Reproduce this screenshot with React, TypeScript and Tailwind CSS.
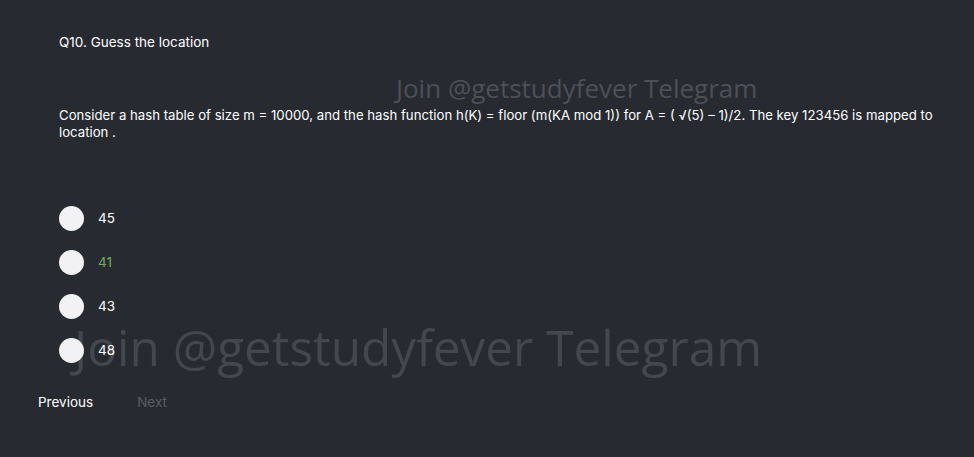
const options = [
  { label: "45", correct: false },
  { label: "41", correct: true },
  { label: "43", correct: false },
  { label: "48", correct: false },
];

function Option({ label, correct }: { label: string; correct: boolean }) {
  return (
    <div className="flex items-center h-[44px]">
      <span className="w-[25px] h-[25px] rounded-full bg-[#f2f2f4] shrink-0" />
      <span
        className={
          "ml-[14px] text-[13.5px] " + (correct ? "text-[#74a85c]" : "text-white")
        }
      >
        {label}
      </span>
    </div>
  );
}

export default function App() {
  return (
    <div
      className="relative w-[974px] h-[457px] bg-[#272a31] overflow-hidden text-white"
      style={{ fontFamily: "Inter, 'Noto Sans', sans-serif" }}
    >
      {/* watermarks sit under the content */}
      <div
        className="absolute left-[396px] top-[69px] text-[26px] text-[#4d5057] pointer-events-none"
        style={{ fontFamily: "'Open Sans', sans-serif" }}
      >
        Join @getstudyfever Telegram
      </div>
      <div
        className="absolute left-[74px] top-[310px] text-[49.5px] text-[#44474e] pointer-events-none"
        style={{ fontFamily: "'Open Sans', sans-serif" }}
      >
        Join @getstudyfever Telegram
      </div>

      <div className="relative flex flex-col pt-[33px]">
        <div className="pl-[59px] text-[13.5px] leading-[18px]">
          Q10. Guess the location
        </div>

        <p className="pl-[59px] pr-[30px] mt-[56px] text-[13.2px] leading-[17px]">
          Consider a hash table of size m = 10000, and the hash function h(K) =
          floor (m(KA mod 1)) for A = ( √(5) – 1)/2. The key 123456 is mapped to
          location .
        </p>

        <div className="pl-[59px] mt-[55px] flex flex-col">
          {options.map((o) => (
            <Option key={o.label} label={o.label} correct={o.correct} />
          ))}
        </div>

        <div className="flex items-center mt-[20px] pl-[38px] text-[13.5px]">
          <span className="text-white">Previous</span>
          <span className="ml-[44px] text-[#5a5d63]">Next</span>
        </div>
      </div>
    </div>
  );
}
